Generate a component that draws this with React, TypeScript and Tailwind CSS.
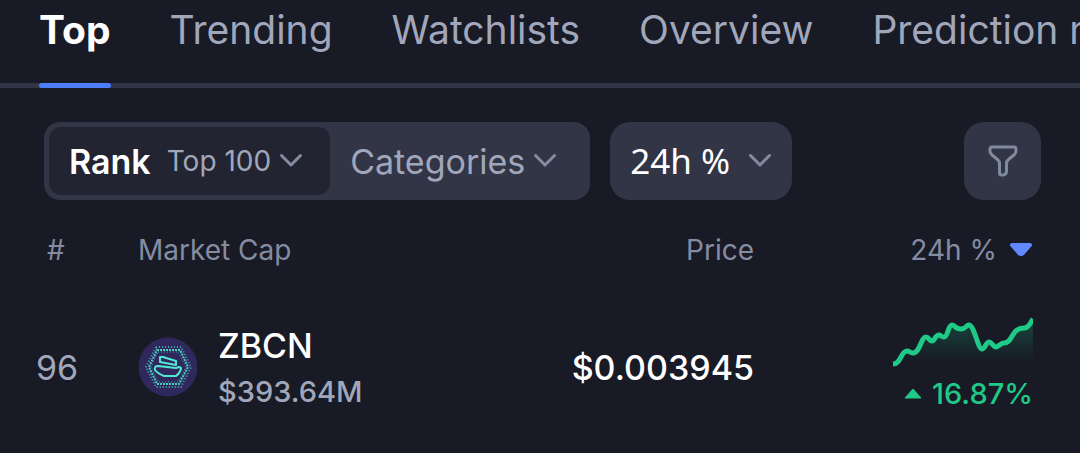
import { useState } from 'react';

const TABS = ['Top', 'Trending', 'Watchlists', 'Overview', 'Prediction markets'];

const COINS = [
  { rank: 96, symbol: 'ZBCN', marketCap: '$393.64M', price: '$0.003945', change: '16.87%' },
];

const SPARK =
  'M2 46 C10 46 10 33 16 33 C19 33 19 35 22 35 C29 35 30 19 35 19 C38 19 38 23 41 23 C44 23 44 17 48 17 C50 17 50 19 53 19 C57 19 57 7 61 7 C64 7 64 11 70 11 C75 11 75 7 78 7 C83 7 87 31 91 31 C94 31 95 24 98 24 C101 24 102 29 105 29 C108 29 109 25 113 25 C122 25 120 10 133 10 C138 10 139 5 142 1';

function Chevron() {
  return (
    <svg width="24" height="16" viewBox="0 0 24 16" fill="none" aria-hidden="true">
      <path
        d="M2.5 2.5 L12 12 L21.5 2.5"
        stroke="#858ca2"
        strokeWidth="3"
        strokeLinecap="round"
        strokeLinejoin="round"
      />
    </svg>
  );
}

function FilterIcon() {
  return (
    <svg width="30" height="32" viewBox="0 0 30 32" fill="none" aria-hidden="true">
      <path
        d="M4 2 H26 Q28 2 28 4 V6 Q28 8 26.500 9.500 L20.500 14.500 Q18.500 16 18.500 18.500 V26 Q18.500 29.500 15.500 30 H13.500 Q11.500 30 11.500 28 V18.500 Q11.500 16 9.500 14.500 L3.500 9.500 Q2 8 2 6 V4 Q2 2 4 2 Z"
        stroke="#808a9d"
        strokeWidth="3"
        strokeLinejoin="round"
      />
    </svg>
  );
}

function CoinLogo() {
  return (
    <svg className="size-[60px]" viewBox="0 0 60 60" fill="none" aria-hidden="true">
      <circle cx="30" cy="30" r="29.500" fill="#30285c" />
      <g stroke="#48cfc0" strokeWidth="2" strokeDasharray="2 1">
        <path d="M19 13 H42 L50 30 L41 47 H19 L11 30 Z" />
      </g>
      <g stroke="#3fa9ab" strokeDasharray="1 2">
        <path d="M18 10 H43 L53 30 L43 50 H18 L8 30 Z" strokeWidth="2" />
        <path d="M20 15 H40 L48 30 L40 45 H20 L13 30 Z" />
      </g>
      <g stroke="#50e8d2" strokeWidth="2" strokeLinejoin="round">
        <path d="M22 20 H25 L38 24 V28 L22 25 Z" />
        <path d="M29 30 L20 29 Q16 29 17 33 Q19 36 26 39 H38 Q42 36 43 32 Q43 30 41 30 L38 31 Z" />
      </g>
    </svg>
  );
}

function Sparkline() {
  return (
    <svg width="142" height="50" viewBox="0 -1 142 50" fill="none" aria-hidden="true">
      <defs>
        <linearGradient id="spark-fill" x1="0" y1="0" x2="0" y2="1">
          <stop offset="0" stopColor="#16c784" stopOpacity="0.25" />
          <stop offset="0.9" stopColor="#16c784" stopOpacity="0" />
        </linearGradient>
      </defs>
      <path d={`${SPARK} V49 H2 Z`} fill="url(#spark-fill)" />
      <path d={SPARK} stroke="#1fc987" strokeWidth="5" strokeLinejoin="round" />
    </svg>
  );
}

export default function App() {
  const [tab, setTab] = useState('Top');

  return (
    <div className="min-h-screen overflow-hidden bg-[#181a25] font-['Inter',sans-serif] text-white">
      {/* Tabs */}
      <nav className="flex gap-[59px] overflow-hidden whitespace-nowrap pl-[39px] shadow-[inset_0_-5px_0_#323546]">
        {TABS.map((name) => (
          <button
            key={name}
            onClick={() => setTab(name)}
            className={`shrink-0 pt-1 text-[39px] leading-[52px] ${
              tab === name ? 'font-bold text-white' : 'text-[#a1a7bb]'
            }`}
          >
            {name}
            <span
              className={`mt-[27px] block h-[5px] rounded-sm ${tab === name ? 'bg-[#4c7dfb]' : ''}`}
            />
          </button>
        ))}
      </nav>

      {/* Filters */}
      <div className="flex gap-5 pt-[34px] pr-[39px] pl-11">
        <div className="flex h-[78px] rounded-2xl bg-[#323546] p-[5px]">
          <button className="flex items-center rounded-xl bg-[#222431] pr-[27px] pl-5">
            <span className="mr-4 text-[34px] font-semibold">Rank</span>
            <span className="mr-2 text-[28px] text-[#a1a7bb]">Top 100</span>
            <Chevron />
          </button>
          <button className="flex items-center gap-2 pr-7 pl-5 text-[34px] text-[#a1a7bb]">
            Categories
            <Chevron />
          </button>
        </div>
        <button className="flex h-[78px] items-center gap-[18px] rounded-[20px] bg-[#323546] px-5 font-['Noto_Sans',sans-serif] text-[35px]">
          24h %
          <Chevron />
        </button>
        <button
          aria-label="Filter"
          className="ml-auto flex h-[78px] w-[77px] items-center justify-center rounded-[20px] bg-[#323546]"
        >
          <FilterIcon />
        </button>
      </div>

      {/* Coins */}
      <table className="mt-7 w-full">
        <thead className="text-[28px] leading-[44px] text-[#858ca2]">
          <tr>
            <th className="w-[138px] pl-[47px] text-left font-normal">#</th>
            <th className="text-left font-normal">Market Cap</th>
            <th className="text-right font-normal">Price</th>
            <th className="w-[326px] pr-[47px] font-normal">
              <button className="ml-auto flex items-center gap-3">
                24h %
                <svg width="24" height="16" viewBox="0 0 24 16" aria-hidden="true">
                  <path
                    d="M3 3 H21 L14 11 Q12 13 10 11 Z"
                    fill="#6188ff"
                    stroke="#6188ff"
                    strokeWidth="4"
                    strokeLinejoin="round"
                  />
                </svg>
              </button>
            </th>
          </tr>
        </thead>
        <tbody>
          {COINS.map((coin) => (
            <tr key={coin.symbol} className="h-[190px]">
              <td className="pl-9 text-[34px] text-[#a1a7bb]">{coin.rank}</td>
              <td>
                <div className="flex items-center gap-5">
                  <CoinLogo />
                  <div className="pt-1">
                    <div className="text-[34px] leading-[46px] font-medium">{coin.symbol}</div>
                    <div className="text-[29px] leading-[46px] font-medium text-[#a1a7bb]">
                      {coin.marketCap}
                    </div>
                  </div>
                </div>
              </td>
              <td className="text-right text-[34px] font-medium">{coin.price}</td>
              <td className="pr-[47px]">
                <div className="flex flex-col items-end">
                  <Sparkline />
                  <div className="mt-1 flex items-center gap-[10px] text-[29px] leading-[46px] font-medium text-[#1fc987]">
                    <svg width="18" height="12" viewBox="0 0 18 12" aria-hidden="true">
                      <path d="M9 1 L17 10 H1 Z" fill="#1fc987" stroke="#1fc987" strokeLinejoin="round" />
                    </svg>
                    {coin.change}
                  </div>
                </div>
              </td>
            </tr>
          ))}
        </tbody>
      </table>
    </div>
  );
}
